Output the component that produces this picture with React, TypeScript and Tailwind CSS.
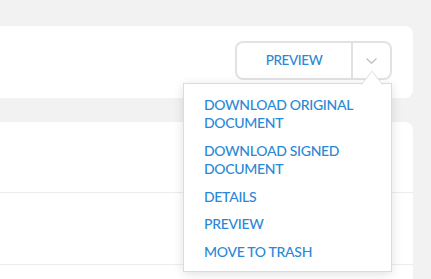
import { useState } from 'react';

const menuItems = [
  'DOWNLOAD ORIGINAL DOCUMENT',
  'DOWNLOAD SIGNED DOCUMENT',
  'DETAILS',
  'PREVIEW',
  'MOVE TO TRASH',
];

export default function App() {
  const [open] = useState(true);

  return (
    <div className="min-h-[279px] bg-[#f2f2f2] pt-[26px] pr-[18px] font-['Lato',sans-serif]">
      {/* top card with the action buttons */}
      <div className="flex h-[72px] justify-end rounded-r-[8px] bg-white pr-[21px] pt-[15px]">
        <div className="relative h-[39px]">
          <div className="flex h-[39px] w-[157px] rounded-[8px] border-2 border-[#e2e2e2] bg-white">
            <button className="flex w-[116px] items-center justify-center border-r-2 border-[#e2e2e2] text-[13.5px] font-medium tracking-[-0.4px] text-[#2b88d6]">
              PREVIEW
            </button>
            <button className="flex flex-1 items-center justify-center">
              <svg width="11" height="6" viewBox="0 0 11 6" fill="none">
                <path d="M0.5 0.5L5.5 5.2L10.5 0.5" stroke="#bdbdbd" strokeWidth="1.2" />
              </svg>
            </button>
          </div>

          {open && (
            <div className="absolute right-0 top-[42px] z-10 w-[209px] border border-[#dcdcdc] bg-white pb-[5px] pl-[20px] pr-3 pt-[7px] shadow-[0_2px_10px_rgba(0,0,0,0.12)]">
              <svg className="absolute right-[8px] top-[-14px]" width="22" height="15" viewBox="0 0 22 15">
                <path d="M0 15L11 1L22 15Z" fill="#ffffff" />
                <path d="M0.5 14.5L11 1.2L21.5 14.5" fill="none" stroke="#dcdcdc" strokeWidth="1" />
              </svg>
              {menuItems.map((item) => (
                <div
                  key={item}
                  className="py-[4.5px] text-[14px] font-medium leading-[18.5px] tracking-[-0.3px] text-[#2b88d6]"
                >
                  {item}
                </div>
              ))}
            </div>
          )}
        </div>
      </div>

      {/* list card */}
      <div className="mt-[24px] rounded-r-[8px] bg-white">
        <div className="h-[71px] border-b border-[#ececec]" />
        <div className="h-[72px] border-b border-[#ececec]" />
        <div className="h-[20px]" />
      </div>
    </div>
  );
}
